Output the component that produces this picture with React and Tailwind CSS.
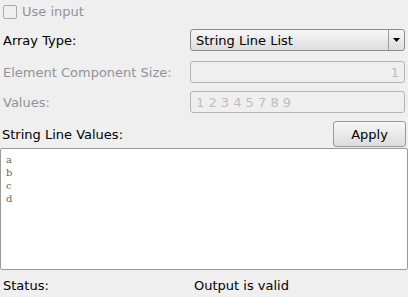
const field =
  "w-[215px] h-[22px] border border-[#b4b4b4] rounded-[3px] bg-[#efefef] flex items-center px-[5px] text-[#bdbdbd]";

export default function App() {
  return (
    <div className="w-[408px] h-[297px] bg-[#efefef] text-[13px] text-black overflow-hidden font-['DejaVu_Sans',sans-serif] leading-none flex flex-col">
      {/* use input */}
      <div className="h-[23px] flex items-center pl-[3px] gap-[5px] shrink-0">
        <div className="w-[14px] h-[14px] border border-[#a8a8a8] rounded-[2px] bg-[#efefef]" />
        <span className="text-[#8f9399]">Use input</span>
      </div>

      {/* array type */}
      <div className="h-[22px] mt-[6px] flex items-center justify-between pr-[3px] shrink-0">
        <span className="pl-[3px]">Array Type:</span>
        <div className="w-[215px] h-[22px] border border-[#8c8c8c] rounded-[3px] bg-gradient-to-b from-[#f7f7f7] to-[#dddddd] flex items-center">
          <span className="flex-1 pl-[5px]">String Line List</span>
          <div className="w-[16px] h-full border-l border-[#9c9c9c] flex items-center justify-center">
            <svg width="7" height="4" viewBox="0 0 7 4">
              <path d="M0 0 H7 L3.5 4 Z" fill="#000" />
            </svg>
          </div>
        </div>
      </div>

      {/* element component size */}
      <div className="h-[22px] mt-[10px] flex items-center justify-between pr-[3px] shrink-0">
        <span className="pl-[3px] text-[#8f9399]">Element Component Size:</span>
        <div className={field + " justify-end"}>1</div>
      </div>

      {/* values */}
      <div className="h-[22px] mt-[8px] flex items-center justify-between pr-[3px] shrink-0">
        <span className="pl-[3px] text-[#8f9399]">Values:</span>
        <div className={field}>1 2 3 4 5 7 8 9</div>
      </div>

      {/* string line values header */}
      <div className="h-[26px] mt-[8px] flex items-center justify-between pr-[2px] shrink-0">
        <span className="pl-[2px]">String Line Values:</span>
        <button className="w-[73px] h-[26px] border border-[#999999] rounded-[3px] bg-gradient-to-b from-[#f7f7f7] to-[#dcdcdc] flex items-center justify-center">
          Apply
        </button>
      </div>

      {/* text area */}
      <div className="h-[122px] mt-[1px] border border-[#9a9a9a] rounded-[2px] bg-white px-[5px] py-[4px] shrink-0 font-['DejaVu_Serif',serif] text-[10px] leading-[13px] text-[#6f6553]">
        <div>a</div>
        <div>b</div>
        <div>c</div>
        <div>d</div>
      </div>

      {/* status */}
      <div className="flex-1 flex items-center pt-[3px]">
        <span className="pl-[3px] w-[194px]">Status:</span>
        <span>Output is valid</span>
      </div>
    </div>
  );
}
